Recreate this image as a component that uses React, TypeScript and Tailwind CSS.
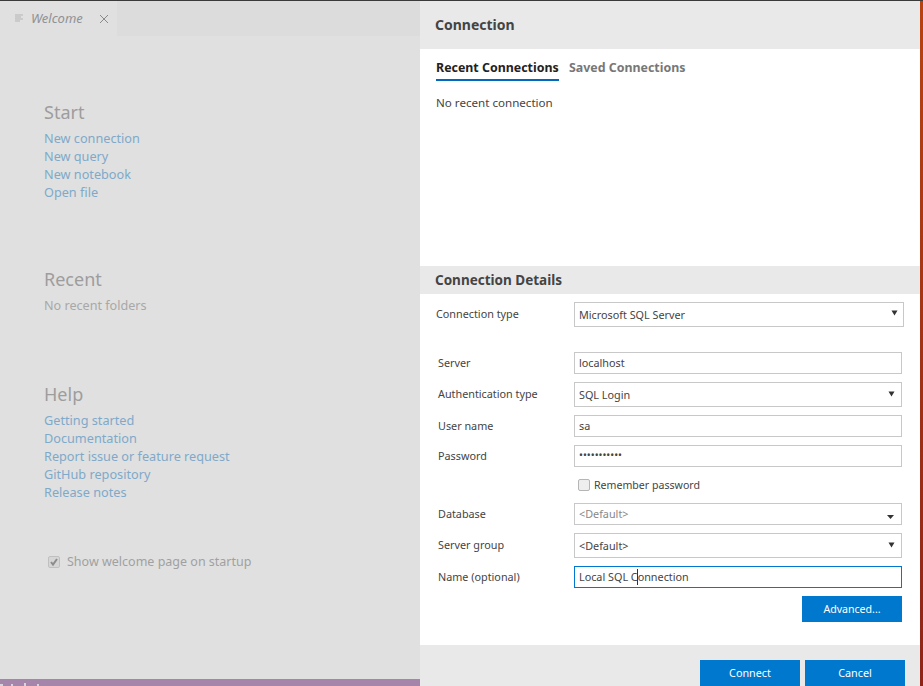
import React from "react";

const font = { fontFamily: '"Noto Sans", sans-serif' };

function Links({ items }: { items: string[] }) {
  return (
    <div className="mt-[5px] flex flex-col">
      {items.map((t) => (
        <a key={t} className="h-[18px] text-[12.7px] leading-[18px] text-[#7fa9c9] whitespace-nowrap">
          {t}
        </a>
      ))}
    </div>
  );
}

function Arrow({ className = "" }: { className?: string }) {
  return (
    <svg width="7" height="6" viewBox="0 0 7 6" className={className}>
      <path d="M0.5 0.5h6L3.5 5.5z" fill="#333" />
    </svg>
  );
}

function Field({
  label,
  value,
  h,
  arrow,
  mt,
  w = "w-[328px]",
  lab = "pl-[2px]",
  border = "border-[#c8c8c8]",
  arrowCls = "right-[6px] top-[8px]",
  children,
}: {
  label: string;
  value?: string;
  h: string;
  arrow?: boolean;
  mt: string;
  w?: string;
  lab?: string;
  border?: string;
  arrowCls?: string;
  children?: React.ReactNode;
}) {
  return (
    <div className={"flex items-center " + mt}>
      <div className={"w-[138px] shrink-0 text-[10.8px] text-[#444] whitespace-nowrap " + lab + (arrow ? " pb-[1px]" : "")}>{label}</div>
      <div className={"relative flex items-center border pl-[4px] text-[10.8px] text-[#444] " + border + " " + h + " " + w + (arrow ? " pt-[2px]" : "")}>
        {children ?? value}
        {arrow && <Arrow className={"absolute " + arrowCls} />}
      </div>
    </div>
  );
}

export default function App() {
  return (
    <div className="flex h-[686px] w-[923px] flex-col overflow-hidden bg-[#e0e0e0]" style={font}>
      <div className="h-[1px] w-full shrink-0 bg-[#3a3a38]" />
      <div className="flex min-h-0 flex-1">
        {/* Left, dimmed welcome page */}
        <div className="flex w-[420px] shrink-0 flex-col">
          <div className="flex h-[35px] shrink-0 bg-[#dcdcdc]">
            <div className="flex w-[117px] items-center bg-[#e0e0e0] pl-[15px]">
              <svg width="9" height="9" viewBox="0 0 9 9">
                <path d="M0 1h8M0 3h6M0 5h8M0 7h5" stroke="#b5b5b5" strokeWidth="1" />
              </svg>
              <span className="ml-[7px] text-[13px] italic text-[#8f9296]">Welcome</span>
              <svg width="10" height="10" viewBox="0 0 10 10" className="ml-[16px]">
                <path d="M1 1l8 8M9 1l-8 8" stroke="#8a8a8a" strokeWidth="1" />
              </svg>
            </div>
          </div>
          <div className="flex flex-1 flex-col pl-[44px]">
            <div className="mt-[64px] text-[18px] leading-[24px] text-[#9d9d9d]">Start</div>
            <Links items={["New connection", "New query", "New notebook", "Open file"]} />
            <div className="mt-[66px] text-[18px] leading-[24px] text-[#9d9d9d]">Recent</div>
            <div className="mt-[6px] text-[12.6px] leading-[18px] text-[#a8a8a8]">No recent folders</div>
            <div className="mt-[67px] text-[18px] leading-[24px] text-[#9d9d9d]">Help</div>
            <Links items={["Getting started", "Documentation", "Report issue or feature request", "GitHub repository", "Release notes"]} />
            <div className="mt-[52px] flex items-center">
              <div className="ml-[4px] flex h-[12px] w-[12px] items-center justify-center rounded-[2px] border border-[#c0c0c0] bg-[#d6d6d6]">
                <svg width="10" height="10" viewBox="0 0 10 10">
                  <path d="M2 5l2 2.5L8 2" stroke="#8c8c8c" strokeWidth="2" fill="none" />
                </svg>
              </div>
              <span className="ml-[7px] text-[12.5px] text-[#a0a0a0]">Show welcome page on startup</span>
            </div>
          </div>
          <div className="relative h-[7px] shrink-0 bg-[#a585a9]">
            <div className="absolute left-0 top-[5px] h-[2px] w-[3px] bg-[#d9d3dc]" />
            <div className="absolute left-[11px] top-[5px] h-[2px] w-[2px] bg-[#d9d3dc]" />
            <div className="absolute left-[24px] top-[4px] h-[3px] w-[2px] bg-[#d9d3dc]" />
            <div className="absolute left-[37px] top-[5px] h-[2px] w-[2px] bg-[#d9d3dc]" />
          </div>
        </div>

        {/* Right, connection dialog */}
        <div className="flex w-[500px] shrink-0 flex-col bg-white">
          <div className="flex h-[48px] shrink-0 items-center bg-[#e9e9e9] pb-[2px] pl-[15px] text-[14px] font-bold text-[#444]">Connection</div>
          <div className="flex h-[217px] shrink-0 flex-col pl-[16px]">
            <div className="mt-[10px] flex gap-[10px] text-[12.4px] font-bold">
              <div className="h-[22px] w-[123px] border-b-2 border-[#0068bd] leading-[18px] text-[#222] whitespace-nowrap">Recent Connections</div>
              <div className="leading-[18px] text-[#777] whitespace-nowrap">Saved Connections</div>
            </div>
            <div className="mt-[13px] text-[11.6px] leading-[18px] text-[#444]">No recent connection</div>
          </div>
          <div className="flex h-[28px] shrink-0 items-center bg-[#e9e9e9] pt-[1px] pl-[15px] text-[13.5px] font-bold text-[#444]">Connection Details</div>
          <div className="flex flex-1 flex-col pl-[16px]">
            <Field label="Connection type" value="Microsoft SQL Server" h="h-[25px]" w="w-[330px]" lab="" mt="mt-[8px]" arrow arrowCls="right-[5px] top-[7px]" />
            <Field label="Server" value="localhost" h="h-[22px]" mt="mt-[25px]" />
            <Field label="Authentication type" value="SQL Login" h="h-[25px]" mt="mt-[8px]" arrow />
            <Field label="User name" value="sa" h="h-[22px]" mt="mt-[8px]" />
            <Field label="Password" h="h-[22px]" mt="mt-[8px]">
              <span className="text-[10.4px]">•••••••••••</span>
            </Field>
            <div className="mt-[10px] flex h-[16px] items-center pl-[142px]">
              <div className="h-[12px] w-[12px] rounded-[2px] border border-[#b5b5b5] bg-[#eeeeee]" />
              <span className="ml-[4px] pt-[1px] text-[10.6px] text-[#444]">Remember password</span>
            </div>
            <Field label="Database" h="h-[22px]" mt="mt-[10px]">
              <span className="text-[#888]">&lt;Default&gt;</span>
              <svg width="7" height="4" viewBox="0 0 7 4" className="absolute right-[7px] top-[11px]">
                <path d="M0 0h7L3.5 4z" fill="#333" />
              </svg>
            </Field>
            <Field label="Server group" value="<Default>" h="h-[25px]" mt="mt-[8px]" arrow />
            <Field label="Name (optional)" h="h-[22px]" mt="mt-[8px]" border="border-[#0078d0]">
              <span className="relative">
                Local SQL Connection
                <span className="absolute left-[58px] top-0 h-full w-px bg-[#333]" />
              </span>
            </Field>
            <div className="mt-[8px] flex w-[466px] justify-end">
              <button className="h-[26px] w-[100px] bg-[#0078cd] pt-[1px] text-[10.6px] text-white">Advanced...</button>
            </div>
          </div>
          <div className="flex h-[41px] shrink-0 justify-end gap-[5px] bg-[#e9e9e9] pt-[15px] pr-[15px]">
            <button className="h-[26px] w-[100px] bg-[#0078cd] text-[10.8px] text-white">Connect</button>
            <button className="h-[26px] w-[100px] bg-[#0078cd] text-[10.8px] text-white">Cancel</button>
          </div>
        </div>
        <div className="w-[3px] shrink-0 bg-gradient-to-b from-[#b8420f] to-[#8f2418]" />
      </div>
    </div>
  );
}
